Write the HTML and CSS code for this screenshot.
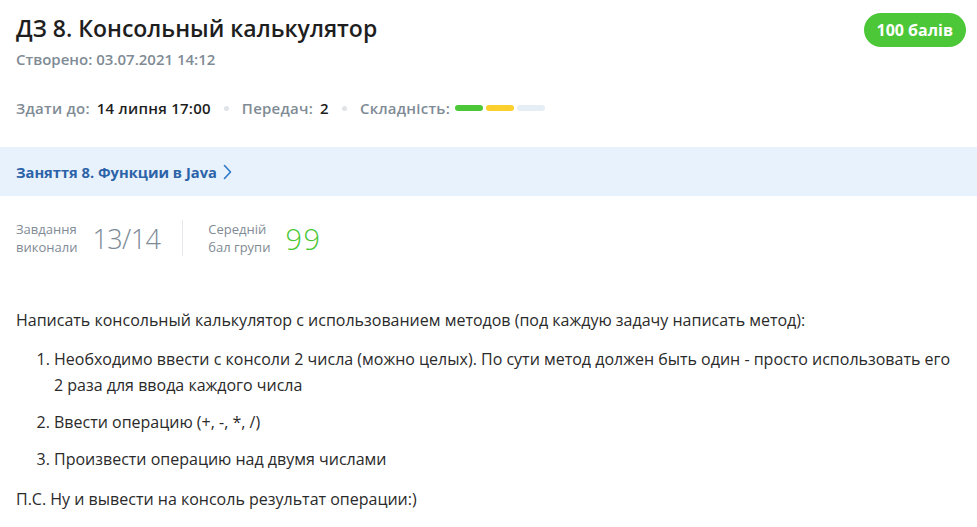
FILE: index.html
```html
<!DOCTYPE html>
<html lang="uk">
<head>
<meta charset="utf-8">
<link rel="stylesheet" href="styles.css">
</head>
<body>
<div class="page">
  <header class="head">
    <div class="head-main">
      <h1 class="title">ДЗ 8. Консольный калькулятор</h1>
      <div class="created">Створено: 03.07.2021 14:12</div>
    </div>
    <div class="badge">100 балів</div>
  </header>
  <div class="meta">
    <span class="label">Здати до:</span><span class="value">14 липня 17:00</span>
    <span class="dot"></span>
    <span class="label">Передач:</span><span class="value">2</span>
    <span class="dot"></span>
    <span class="label">Складність:</span>
    <span class="bars"><span class="bar green"></span><span class="bar yellow"></span><span class="bar empty"></span></span>
  </div>
  <div class="lesson">
    <a class="lesson-link">Заняття 8. Функции в Java
      <svg class="chev" width="9" height="16" viewBox="0 0 9 16"><path d="M1.5 1.5 L7.5 8 L1.5 14.5" fill="none" stroke="#2d78c8" stroke-width="1.6" stroke-linecap="round" stroke-linejoin="round"/></svg>
    </a>
  </div>
  <div class="stats">
    <div class="stat">
      <div class="stat-label">Завдання<br>виконали</div>
      <div class="stat-num">13/14</div>
    </div>
    <div class="divider"></div>
    <div class="stat">
      <div class="stat-label">Середній<br>бал групи</div>
      <div class="stat-num green-num">99</div>
    </div>
  </div>
  <div class="content">
    <p>Написать консольный калькулятор с использованием методов (под каждую задачу написать метод):</p>
    <ol>
      <li>Необходимо ввести с консоли 2 числа (можно целых). По сути метод должен быть один - просто использовать его 2 раза для ввода каждого числа</li>
      <li>Ввести операцию (+, -, *, /)</li>
      <li>Произвести операцию над двумя числами</li>
    </ol>
    <p>П.С. Ну и вывести на консоль результат операции:)</p>
  </div>
</div>
</body>
</html>
```

FILE: styles.css
```css
* { box-sizing: border-box; }
html, body { margin: 0; padding: 0; background: #fff; }
body {
  font-family: "Open Sans", "Noto Sans", sans-serif;
  color: #222;
}
.page { width: 977px; }
.head {
  display: flex;
  justify-content: space-between;
  align-items: flex-start;
  padding: 12px 11px 0 16px;
}
.title {
  margin: 0;
  font-size: 23px;
  line-height: 32px;
  font-weight: 600;
  color: #1e1e1e;
}
.created {
  margin-top: 6px;
  font-size: 15px;
  line-height: 18px;
  font-weight: 600;
  color: #7f8b95;
}
.badge {
  margin-top: 1px;
  background: #4cc737;
  color: #fff;
  font-size: 16px;
  font-weight: 700;
  height: 34px;
  line-height: 34px;
  padding: 0 13px;
  border-radius: 17px;
}
.meta {
  display: flex;
  align-items: center;
  padding: 0 16px;
  margin-top: 30px;
  height: 20px;
  font-size: 15px;
  font-weight: 600;
  letter-spacing: 0.25px;
}
.label { color: #7f8b95; margin-right: 7px; }
.value { color: #1e1e1e; }
.dot {
  width: 5px; height: 5px; border-radius: 50%;
  background: #dfe4e8;
  margin: 0 13px;
}
.bars { display: flex; gap: 3px; margin-left: -2px; }
.bar { width: 28px; height: 6px; border-radius: 3px; }
.bar.green { background: #4cc737; }
.bar.yellow { background: #fcd02c; }
.bar.empty { background: #e6eef5; }
.lesson {
  margin-top: 29px;
  height: 49px;
  background: #e8f2fc;
  display: flex;
  align-items: center;
  padding: 0 16px;
}
.lesson-link {
  display: flex;
  align-items: center;
  gap: 6px;
  font-size: 14.7px;
  font-weight: 700;
  color: #2c63a8;
}
.stats {
  display: flex;
  align-items: center;
  padding: 0 16px;
  margin-top: 23px;
  height: 38px;
}
.stat { display: flex; align-items: center; gap: 15px; }
.stat-label {
  font-size: 13px;
  line-height: 18px;
  color: #7f8b95;
}
.stat-num {
  font-size: 27px;
  font-weight: 300;
  color: #7d8a96;
  letter-spacing: -0.6px;
}
.green-num { color: #4cc737; letter-spacing: 1.5px; font-size: 29px; }
.divider {
  width: 1px; height: 36px;
  background: #e4e8ec;
  margin: 0 25px 0 22px;
}
.content {
  padding: 0 16px;
  margin-top: 50px;
  font-size: 16px;
  line-height: 26px;
  color: #2a2a2a;
}
.content p { margin: 0; }
.content ol { margin: 13px 0 14px; padding-left: 38px; }
.content li { margin-bottom: 11px; }
.content li:last-child { margin-bottom: 0; }
```
